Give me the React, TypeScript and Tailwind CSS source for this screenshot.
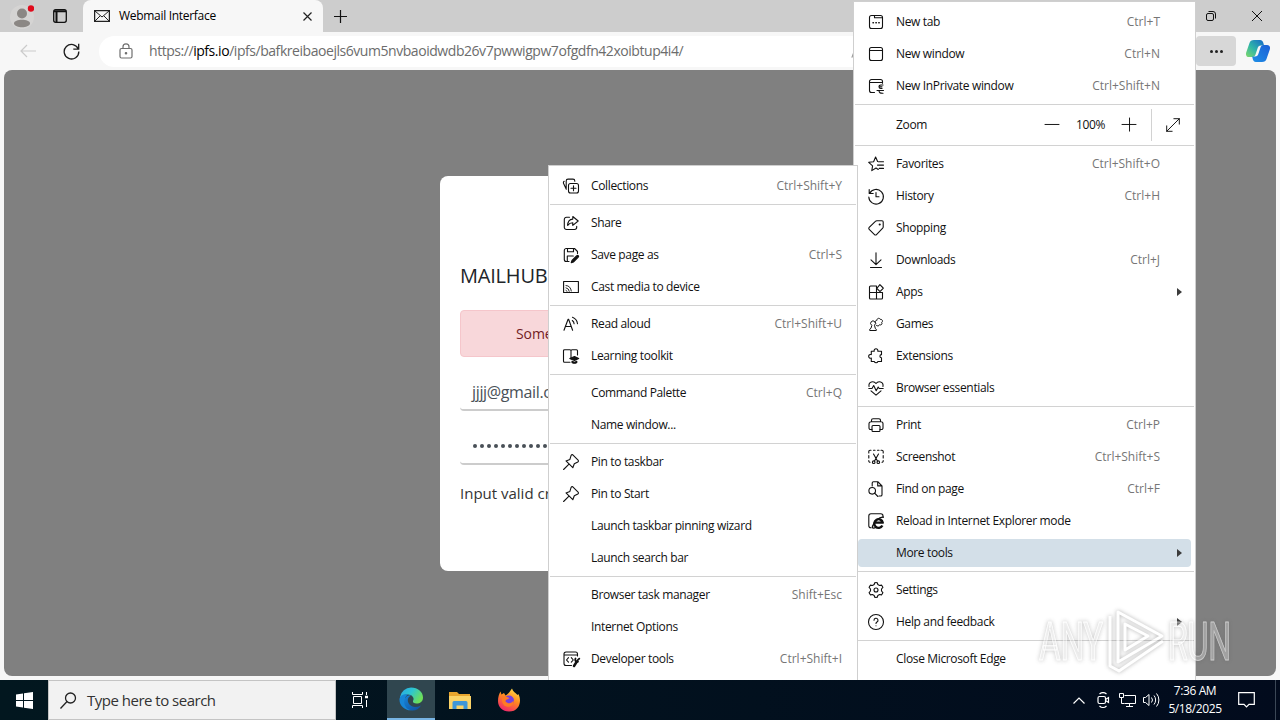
import type { ReactNode } from 'react';

interface MenuEntry {
  label: string;
  icon?: ReactNode;
  shortcut?: string;
  submenu?: boolean;
  active?: boolean;
}

function Glyph({ children, size = 16, width = 1.1 }: { children: ReactNode; size?: number; width?: number }) {
  return (
    <svg
      width={size}
      height={size}
      viewBox="0 0 16 16"
      fill="none"
      stroke="currentColor"
      strokeWidth={width}
      strokeLinecap="round"
      strokeLinejoin="round"
      className="shrink-0 overflow-visible"
    >
      {children}
    </svg>
  );
}

const icons = {
  newTab: (
    <Glyph>
      <rect x="1.5" y="1.5" width="13" height="13" rx="2" />
      <path d="M6.5 1.5v2.2h8" />
      <path d="M5 8.7h.4M7.9 8.7h.4M10.8 8.7h.4" strokeWidth="1.5" />
    </Glyph>
  ),
  newWindow: (
    <Glyph>
      <rect x="1.5" y="1.5" width="13" height="13" rx="2" />
      <path d="M1.5 4.5h13" />
    </Glyph>
  ),
  inPrivate: (
    <Glyph>
      <path d="M6.5 14.5h-3a2 2 0 0 1-2-2v-9a2 2 0 0 1 2-2h9a2 2 0 0 1 2 2v1.7M1.5 4.5h13" />
      <path d="M15 7h-2.300a1.700 1.700 0 0 0 0 3.400H14M9 12.500h6.500M11 12.500c0 2 1 3 4 2.800M12 8.700h2" />
    </Glyph>
  ),
  favorites: (
    <Glyph>
      <path d="M10.3 13.5 8 12l-4.2 2.6.8-4.800L.7 6.300l4.900-.6L7.600 1l2 4.500M10.500 5.800h5M9.500 9.100h6M11.200 12.400h4.300" />
    </Glyph>
  ),
  history: (
    <Glyph>
      <path d="M1.2 1.5v4h4M1.600 5.400A7.300 7.300 0 1 1 .8 9M8 4.500v4.300h3" />
    </Glyph>
  ),
  shopping: (
    <Glyph>
      <path d="M9 .8h5A1.200 1.200 0 0 1 15.200 2v5a1.500 1.500 0 0 1-.5 1.100l-6.200 6.500a1.400 1.400 0 0 1-2 0L1.200 9.300a1.400 1.400 0 0 1 0-2l6.200-5.900A2 2 0 0 1 9 .8Z" />
      <circle cx="11.7" cy="4.5" r=".5" fill="currentColor" />
    </Glyph>
  ),
  downloads: (
    <Glyph>
      <path d="M8 .8v11.700M3 7.800l5 4.900 5-4.900M2.500 15.500h11" />
    </Glyph>
  ),
  apps: (
    <Glyph>
      <path d="M1.500 8.500h13V14a1 1 0 0 1-1 1h-11a1 1 0 0 1-1-1V3a1 1 0 0 1 1-1H8.500v13" />
      <path d="m11.900.7 3.300 3.300a.3.300 0 0 1 0 .4l-3 3a.3.300 0 0 1-.4 0L8.800 4.300Z" fill="#fff" />
    </Glyph>
  ),
  games: (
    <Glyph width={1}>
      <path d="M3.500 9.200a2.400 2.400 0 1 1 3 0l.8 3.300 1 .8v1.200H1.700v-1.200l1-.8Z" />
      <path d="M7.800 7c-1.300-1-.3-3 1-2.500C8.800 2.200 11.500 1.600 12.200 3.300c2.200-.4 3 2.200 1.500 3.200 1 1.700-.7 3-2.200 2.200-.6 1.600-2 1.500-3 .8" />
    </Glyph>
  ),
  extensions: (
    <Glyph>
      <path d="M3.300 3.300h2.900a1.900 1.900 0 1 1 3.600 0h3.700v3.300a1.600 1.600 0 0 0 0 3.200v3.700H9.900a1.900 1.900 0 0 1-3.600 0h-3v-3.400a1.900 1.900 0 1 1 0-3.500Z" />
    </Glyph>
  ),
  essentials: (
    <Glyph>
      <path d="M1 6.500C.3 1.500 5.700.5 8 3.500c2.300-3 7.700-2 7 3M3 10.800 8 15.200l5-4.400M.8 8.500H4l1.700-3 2.500 5.200L10.200 7l1 1.500h4" />
    </Glyph>
  ),
  print: (
    <Glyph>
      <path d="M4 12.500H2.500A1.500 1.500 0 0 1 1 11V6.700a2 2 0 0 1 2-2h10a2 2 0 0 1 2 2V11a1.500 1.500 0 0 1-1.500 1.500H12M3.500 4.700V3.300a1.500 1.500 0 0 1 1.500-1.500h6a1.500 1.500 0 0 1 1.500 1.500v1.400" />
      <rect x="4" y="8.500" width="8" height="6" rx="1" />
    </Glyph>
  ),
  screenshot: (
    <Glyph>
      <path d="M.8 4V2.600A1.300 1.300 0 0 1 2.100 1.300H3M5.500 1.300h1.500M9.500 1.300H11M13 1.300h.9a1.300 1.300 0 0 1 1.300 1.300V4M15.200 6.500V9M15.200 11.500v.5a1.200 1.200 0 0 1-1.200 1.200M.8 6.500V9M.8 11.500v.5A1.200 1.200 0 0 0 2 13.200M5.500 5l4 7M10.500 5l-4 7" />
      <circle cx="5.700" cy="13.200" r="1.300" />
      <circle cx="10.300" cy="13.200" r="1.300" />
    </Glyph>
  ),
  find: (
    <Glyph>
      <path d="M4.200 5V2A1.300 1.300 0 0 1 5.500.7h4.300L14 5v8.700a1.300 1.300 0 0 1-1.300 1.300H11M9.700.9v4h4" />
      <circle cx="4.200" cy="9.800" r="3.300" />
      <path d="m6.600 12.200 3.300 3.300" />
    </Glyph>
  ),
  ieMode: (
    <Glyph>
      <path d="M3 14.800A2 2 0 0 1 .8 12.700V3A2.200 2.200 0 0 1 3 .8h9.800A2.200 2.200 0 0 1 15 3v1.500" />
      <path d="M14.400 12.500a4.300 4.300 0 1 1 .4-2.800H7.500" strokeWidth="2.300" strokeLinecap="butt" />
      <path d="M15.400 4.200C12 3.200 5 9 4.200 14.800c1.300.8 2.600.3 4-.5" strokeWidth="1.200" />
    </Glyph>
  ),
  settings: (
    <Glyph>
      <circle cx="8" cy="8" r="2" />
      <path d="M6.200 2.500 6.700.7a7.400 7.400 0 0 1 2.600 0l.5 1.800 1.800 1 1.900-.4a7.400 7.400 0 0 1 1.400 2.300L13.500 7v2l1.400 1.600a7.400 7.400 0 0 1-1.400 2.300l-1.900-.4-1.800 1-.5 1.800a7.400 7.400 0 0 1-2.600 0l-.5-1.800-1.800-1-1.900.4a7.400 7.400 0 0 1-1.400-2.300L2.500 9V7L1.100 5.400a7.400 7.400 0 0 1 1.400-2.300l1.900.4Z" />
    </Glyph>
  ),
  help: (
    <Glyph>
      <circle cx="8" cy="8" r="7.500" />
      <path d="M6 6.300a2 2 0 1 1 3 1.700c-.7.400-1 .8-1 1.500M8 11.700v.1" />
    </Glyph>
  ),
  collections: (
    <Glyph>
      <rect x="5.500" y="5.500" width="10" height="9.500" rx="2" />
      <path d="M10.500 7.700v5M8 10.200h5M3.300 11.200 .6 5.500a1.600 1.600 0 0 1 .6-2.200M3.200 10.500V2.900a1.800 1.800 0 0 1 1.800-1.800h5a1.800 1.800 0 0 1 1.800 1.800v.3" />
    </Glyph>
  ),
  share: (
    <Glyph>
      <path d="M6.500 2.300H3.500a2.200 2.200 0 0 0-2.200 2.200v7.800a2.200 2.200 0 0 0 2.200 2.200h8a2.200 2.200 0 0 0 2.200-2.200v-1" />
      <path d="M9.800 1.500 15.200 6l-5.400 4.400V7.800C7.500 7.800 6 8.600 4.700 10.500c0-3.700 2.100-6.200 5.100-6.400Z" />
    </Glyph>
  ),
  save: (
    <Glyph>
      <path d="M6 14.500H3.300a2 2 0 0 1-2-2v-9a2 2 0 0 1 2-2h8.200l3 3v2M4.500 1.500v3.200h6V1.500M4.300 14.500V9h6" />
      <path d="m9 13.500 4.800-4.800a1 1 0 0 1 1.500 1.400l-4.700 4.800-2.400.7Z" fill="currentColor" />
    </Glyph>
  ),
  cast: (
    <Glyph>
      <path d="M.6 13.500v-11h14.800v11Z" />
      <path d="M3 11.300a1.500 1.500 0 0 1 1 1M3 8.800a4 4 0 0 1 3.300 3.500M3 6.500c3 0 5 2.500 5.300 5.500" strokeWidth=".9" />
    </Glyph>
  ),
  readAloud: (
    <Glyph>
      <path d="M1 14.200 5.100 3.200h.5l4 11M2.600 10.500h5.500M9.300 4.500a4.500 4.500 0 0 1 1.800 3.300M9.500 1.200a8 8 0 0 1 5 6.500" />
    </Glyph>
  ),
  learning: (
    <Glyph>
      <path d="M7 14.200H1.500a1 1 0 0 1-1-1V2.700a1 1 0 0 1 1-1H7a1 1 0 0 1 1 1v8M8 2.700a1 1 0 0 1 1-1h4.500a1 1 0 0 1 1 1V7" />
      <path d="m6.800 10.500 4.700-2 4.200 2-4.200 2Z" fill="currentColor" />
      <path d="M9 13.300v1.200c1.500 1 3.300 1 4.800 0v-1.200l-2.300.9Z" fill="currentColor" />
    </Glyph>
  ),
  pin: (
    <Glyph>
      <path d="m9.800.8 5.300 5.300a1.200 1.200 0 0 1-.3 1.900l-3.500 1.700-1.500 4L3 6.900l3.900-1.500L8.200 1.200a1.200 1.200 0 0 1 1.600-.4ZM6 10.200.6 15.500" />
    </Glyph>
  ),
  devTools: (
    <Glyph>
      <path d="M8.500 14.500H3a2 2 0 0 1-2-2V3a2 2 0 0 1 2-2h9.500a2 2 0 0 1 2 2v2M1 4h13.500M5.500 6.700 3.500 9l2 2.200M8.300 6.700 10.300 9l-2 2.200" />
      <path d="m11 15 2.700-4.200" strokeWidth="2.500" />
      <path d="M12.500 7.500c-1 2 .5 4 2.500 3.200M16.300 7.600 14.500 9.300" strokeWidth="1.800" />
    </Glyph>
  ),
};

const windowItems: MenuEntry[] = [
  { label: 'New tab', icon: icons.newTab, shortcut: 'Ctrl+T' },
  { label: 'New window', icon: icons.newWindow, shortcut: 'Ctrl+N' },
  { label: 'New InPrivate window', icon: icons.inPrivate, shortcut: 'Ctrl+Shift+N' },
];

const mainMenu: MenuEntry[][] = [
  [
    { label: 'Favorites', icon: icons.favorites, shortcut: 'Ctrl+Shift+O' },
    { label: 'History', icon: icons.history, shortcut: 'Ctrl+H' },
    { label: 'Shopping', icon: icons.shopping },
    { label: 'Downloads', icon: icons.downloads, shortcut: 'Ctrl+J' },
    { label: 'Apps', icon: icons.apps, submenu: true },
    { label: 'Games', icon: icons.games },
    { label: 'Extensions', icon: icons.extensions },
    { label: 'Browser essentials', icon: icons.essentials },
  ],
  [
    { label: 'Print', icon: icons.print, shortcut: 'Ctrl+P' },
    { label: 'Screenshot', icon: icons.screenshot, shortcut: 'Ctrl+Shift+S' },
    { label: 'Find on page', icon: icons.find, shortcut: 'Ctrl+F' },
    { label: 'Reload in Internet Explorer mode', icon: icons.ieMode },
    { label: 'More tools', submenu: true, active: true },
  ],
  [
    { label: 'Settings', icon: icons.settings },
    { label: 'Help and feedback', icon: icons.help, submenu: true },
  ],
  [{ label: 'Close Microsoft Edge' }],
];

const toolsMenu: MenuEntry[][] = [
  [{ label: 'Collections', icon: icons.collections, shortcut: 'Ctrl+Shift+Y' }],
  [
    { label: 'Share', icon: icons.share },
    { label: 'Save page as', icon: icons.save, shortcut: 'Ctrl+S' },
    { label: 'Cast media to device', icon: icons.cast },
  ],
  [
    { label: 'Read aloud', icon: icons.readAloud, shortcut: 'Ctrl+Shift+U' },
    { label: 'Learning toolkit', icon: icons.learning },
  ],
  [{ label: 'Command Palette', shortcut: 'Ctrl+Q' }, { label: 'Name window...' }],
  [
    { label: 'Pin to taskbar', icon: icons.pin },
    { label: 'Pin to Start', icon: icons.pin },
    { label: 'Launch taskbar pinning wizard' },
    { label: 'Launch search bar' },
  ],
  [
    { label: 'Browser task manager', shortcut: 'Shift+Esc' },
    { label: 'Internet Options' },
    { label: 'Developer tools', icon: icons.devTools, shortcut: 'Ctrl+Shift+I' },
  ],
];

function Separator() {
  return (
    <div className="h-[5px] pt-0.5 px-px">
      <div className="h-px bg-[#d2d2d2]" />
    </div>
  );
}

function MenuRow({ item, end }: { item: MenuEntry; end: string }) {
  return (
    <div className="h-8 px-1 py-0.5">
      <div className={`h-7 rounded flex items-center pl-2.5 ${item.active ? 'bg-[#d3dfe8]' : ''}`}>
        <span className="w-4 mr-3 flex text-[#111]">{item.icon}</span>
        <span className="flex-1 whitespace-nowrap">{item.label}</span>
        {item.shortcut && <span className={`tracking-normal text-[#767676] ${end}`}>{item.shortcut}</span>}
        {item.submenu && (
          <svg width="5" height="8" viewBox="0 0 5 8" className="mr-[9px]">
            <path d="M0 0v8l5-4Z" fill="#3b3b3b" />
          </svg>
        )}
      </div>
    </div>
  );
}

function MenuGroups({ groups, end }: { groups: MenuEntry[][]; end: string }) {
  return (
    <>
      {groups.map((group, i) => (
        <div key={i}>
          {i > 0 && <Separator />}
          {group.map((item) => (
            <MenuRow key={item.label} item={item} end={end} />
          ))}
        </div>
      ))}
    </>
  );
}

function MainMenu() {
  return (
    <div className="absolute left-[853px] top-px w-[343px] h-[679px] bg-white border border-[#cfcfcf] border-b-0 py-1">
      {windowItems.map((item) => (
        <MenuRow key={item.label} item={item} end="mr-[31px]" />
      ))}
      <Separator />
      <div className="h-9 flex items-center pl-[42px]">
        <span className="flex-1">Zoom</span>
        <Glyph size={14}>
          <path d="M0 7.400h16" />
        </Glyph>
        <span className="w-[63px] text-center">100%</span>
        <Glyph size={14}>
          <path d="M0 7.400h16M8.600 0v15" />
        </Glyph>
        <span className="w-px h-8 bg-[#d2d2d2] ml-[15px] mr-[14px]" />
        <span className="mr-[15px]">
          <Glyph size={14}>
            <path d="M.8 15.200 15.200.8M9 .8h6.200V7M.8 9v6.200H7" />
          </Glyph>
        </span>
      </div>
      <Separator />
      <MenuGroups groups={mainMenu} end="mr-[31px]" />
    </div>
  );
}

function ToolsMenu() {
  return (
    <div className="absolute left-[548px] top-[165px] w-[310px] h-[515px] bg-white border border-[#cfcfcf] border-b-0 py-1">
      <MenuGroups groups={toolsMenu} end="mr-[11px]" />
    </div>
  );
}

function TabStrip() {
  return (
    <div className="h-8 flex bg-[#cdcdcd]">
      <div className="w-[83px] flex items-center">
        <svg width="24" height="28" viewBox="0 0 24 28" className="ml-[10px]">
          <circle cx="12" cy="15" r="12" fill="#d5d4d3" />
          <circle cx="12" cy="11.500" r="5" fill="#8b8784" />
          <path d="M4 21.500c0-5 16-5 16 0-1 5-15 5-16 0Z" fill="#8b8784" />
          <circle cx="21" cy="6.500" r="3.200" fill="#e00b1c" />
        </svg>
        <svg width="16" height="16" viewBox="0 0 16 16" fill="none" stroke="#111" className="ml-[18px]">
          <rect x="1.700" y="1.700" width="12.600" height="12.600" rx="2" strokeWidth="1.300" />
          <path d="M2 3.300h12M4.500 4v10" strokeWidth="2" />
        </svg>
      </div>
      <div className="w-60 flex items-center bg-[#f7f7f7] rounded-t-lg pl-[11px]">
        <svg width="16" height="12" viewBox="0 0 16 12" fill="none" stroke="#222" strokeWidth="1.300">
          <rect x=".6" y=".6" width="14.800" height="10.800" />
          <path d="m1 1 7 6 7-6M1 11l5-5M15 11l-5-5" strokeWidth="1" />
        </svg>
        <span className="flex-1 pl-[9px] tracking-[-0.3px] text-black">Webmail Interface</span>
        <svg width="9" height="9" viewBox="0 0 9 9" stroke="#222" strokeWidth="1.200" className="mr-[11px]">
          <path d="m.5.5 8 8M8.500.5l-8 8" />
        </svg>
      </div>
      <div className="flex-1 flex items-center pl-[11px]">
        <svg width="13" height="13" viewBox="0 0 13 13" stroke="#111" strokeWidth="1.200">
          <path d="M0 6.500h13M6.500 0v13" />
        </svg>
      </div>
      <div className="flex items-center gap-9 pr-[18px]">
        <svg width="10" height="10" viewBox="0 0 10 10" fill="none" stroke="#111">
          <rect x=".5" y="2.500" width="7" height="7" rx="1.500" />
          <path d="M2.500.5H7A2.500 2.500 0 0 1 9.500 3v4.500" />
        </svg>
        <svg width="10" height="10" viewBox="0 0 10 10" stroke="#111">
          <path d="m0 0 10 10M10 0 0 10" />
        </svg>
      </div>
    </div>
  );
}

function Toolbar() {
  return (
    <div className="h-[38px] flex items-center bg-[#f7f7f7]">
      <svg width="16" height="14" viewBox="0 0 16 14" fill="none" stroke="#cbcbcb" strokeWidth="1.200" className="ml-5">
        <path d="M16 7H1M7 1 1 7l6 6" />
      </svg>
      <svg width="17" height="17" viewBox="0 0 17 17" fill="none" stroke="#1b1b1b" strokeWidth="1.300" className="ml-[27px]">
        <path d="M15.300 6A7.300 7.300 0 1 0 15.800 8.500M15.700.7v5.400h-5.400" />
      </svg>
      <div className="ml-[19px] h-[31px] w-[754px] rounded-l-full bg-white flex items-center pl-5">
        <svg width="14" height="16" viewBox="0 0 14 16" fill="none" stroke="#6e6e6e" strokeWidth="1.200">
          <rect x="1" y="5.500" width="12" height="9.500" rx="1.500" />
          <path d="M4 5.500V3.800a3 3 0 0 1 6 0v1.700" />
          <circle cx="7" cy="10.200" r=".7" fill="#6e6e6e" />
        </svg>
        <span className="ml-4 flex-1 whitespace-nowrap text-sm tracking-[-0.45px] text-[#6c6c6c]">
          https://<span className="text-black">ipfs.io</span>/ipfs/bafkreibaoejls6vum5nvbaoidwdb26v7pwwigpw7ofgdfn42xoibtup4i4/
        </span>
      </div>
      <span className="text-[#999] -ml-[2px]">{icons.readAloud}</span>
      <div className="flex-1" />
      <div className="w-10 h-[30px] rounded bg-[#d7d7d7] flex items-center justify-center gap-0.5">
        <span className="size-[3px] rounded-full bg-[#222]" />
        <span className="size-[3px] rounded-full bg-[#222]" />
        <span className="size-[3px] rounded-full bg-[#222]" />
      </div>
      <svg width="24" height="22" viewBox="0 0 24 22" className="mx-[10px]">
        <defs>
          <linearGradient id="copilotLeft" x1="0" y1="1" x2="1" y2="0">
            <stop offset="0" stopColor="#7fd86a" />
            <stop offset=".45" stopColor="#2fb5a8" />
            <stop offset="1" stopColor="#1767c8" />
          </linearGradient>
          <linearGradient id="copilotRight" x1="0" y1="1" x2="1" y2="0">
            <stop offset="0" stopColor="#1d8fe6" />
            <stop offset="1" stopColor="#1d5fd6" />
          </linearGradient>
        </defs>
        <path
          d="M8 0h6c2 0 3 1.500 3.500 3.500l.5 2h-3c-2 0-3 1-3.500 3l-2 6c-.5 1.500-1.500 2.500-3 2.500H3c-2.500 0-3.500-2-2.800-4.500L3.500 3C4 1 5.500 0 8 0Z"
          fill="url(#copilotLeft)"
        />
        <path
          d="M16 22h-6c-2 0-3-1.500-3.500-4l-.3-1.500H9c2 0 3-1 3.500-3l2-6C15 6 16 5 17.500 5H21c2.500 0 3.500 2 2.800 4.500L20.500 19c-.6 2-2 3-4.500 3Z"
          fill="url(#copilotRight)"
        />
      </svg>
    </div>
  );
}

function LoginCard() {
  return (
    <div className="ml-[436px] mt-[106px] w-[400px] h-[395px] bg-white rounded-lg px-5 overflow-hidden whitespace-nowrap">
      <h1 className="mt-[85px] h-[30px] leading-[30px] text-xl tracking-[-0.2px] font-medium text-[#212529]">MAILHUB</h1>
      <div className="mt-[19px] h-[47px] rounded border border-[#f5c6cb] bg-[#f8d7da] flex items-center pl-[55px] text-sm tracking-[-0.1px] text-[#721c24]">
        Some
      </div>
      <div className="mt-[17px] h-[37px] border-b-2 border-[#ccc] rounded-b pl-3 leading-9 text-base text-[#495057]">
        jjjj@gmail.com
      </div>
      <div className="mt-[17px] h-[37px] pt-px border-b-2 border-[#ccc] rounded-b pl-[13px] flex items-center gap-[3px]">
        {Array.from({ length: 14 }, (_, i) => (
          <span key={i} className="size-1 rounded-full bg-[#495057]" />
        ))}
      </div>
      <p className="mt-4 text-[15px] leading-6 tracking-normal text-[#333]">Input valid cr</p>
    </div>
  );
}

function Watermark() {
  return (
    <svg
      width="204"
      height="72"
      viewBox="0 0 204 72"
      className="absolute left-[1035px] top-[605px] opacity-60 drop-shadow-[0_0_2px_rgba(90,90,90,0.8)]"
      fill="none"
      stroke="#fff"
      strokeLinejoin="round"
    >
      <g fontFamily="Roboto, Liberation Sans, sans-serif" fontSize="53" fill="#fff" fillOpacity=".5" strokeWidth="1">
        <text x="4" y="55" textLength="64" lengthAdjust="spacingAndGlyphs">ANY</text>
        <text x="133" y="55" textLength="63" lengthAdjust="spacingAndGlyphs">RUN</text>
      </g>
      <path d="M83 7 127 31 83 57ZM90 19v26l23-14ZM75 11v50l9 5 44-30" strokeWidth="3" />
    </svg>
  );
}

function Taskbar() {
  return (
    <div className="h-10 flex items-center bg-linear-to-r from-[#02171f] to-[#020b1d] text-white">
      <div className="w-12 flex justify-center">
        <svg width="17" height="17" viewBox="0 0 17 17" fill="#fff">
          <path d="M0 2.500 7 1.500V8H0ZM8 1.300 17 0v8H8ZM0 9h7v6.500l-7-1ZM8 9h9v8l-9-1.300Z" />
        </svg>
      </div>
      <div className="w-72 h-10 border border-[#c4c4c4] bg-[#f2f2f2] flex items-center pl-[11px] text-[#333]">
        <svg width="17" height="17" viewBox="0 0 17 17" fill="none" stroke="#222" strokeWidth="1.300">
          <circle cx="10.500" cy="6" r="5" />
          <path d="m7 9.500-6.500 7" />
        </svg>
        <span className="pl-2.5 text-[15px] tracking-[-0.5px]">Type here to search</span>
      </div>
      <div className="w-[49px] flex justify-center">
        <svg width="17" height="16" viewBox="0 0 17 16" fill="none" stroke="#fff">
          <path d="M.5 0v2.500h10V0M.5 16v-2.500h10V16M1.500 4.500h8v7h-8ZM14.500 0v3M14.500 8v7" />
          <path d="M13 5h3" strokeWidth="2.500" />
        </svg>
      </div>
      <div className="ml-0.5 w-12 h-10 bg-[#30464f] border-b-2 border-[#78b5e4] flex items-center justify-center">
        <svg width="24" height="24" viewBox="0 0 24 24">
          <defs>
            <linearGradient id="edgeTop" x1="0" y1="0" x2="1" y2=".5">
              <stop offset="0" stopColor="#2ba6e4" />
              <stop offset=".5" stopColor="#2cc5d2" />
              <stop offset="1" stopColor="#6ddf59" />
            </linearGradient>
            <linearGradient id="edgeLow" x1="0" y1="0" x2="1" y2="1">
              <stop offset="0" stopColor="#1684d8" />
              <stop offset="1" stopColor="#104f9d" />
            </linearGradient>
          </defs>
          <path
            d="M1 10A11.500 11.500 0 0 1 12 .5C19 .5 24 5 24 10.500c0 4-3 6-6.500 6-2.500 0-4-1-3.500-2.500 2-3-1-6.500-5-6.500C5 7.500 2 9 1 12Z"
            fill="url(#edgeTop)"
          />
          <path d="M.5 12C1 8.500 5 6.500 9 7.500 6 9 5 13 7 17c2 3 6 5.500 10 5C9 26 0 20 .5 12Z" fill="#1785d6" />
          <path
            d="M12 8.500c-6 3-3 11 4 11.500 2 0 4-.5 6-1.500-2 4-7 6-11 4.500C5 21 3 13 8 9c1.500-.8 3-1 4-.5Z"
            fill="url(#edgeLow)"
          />
        </svg>
      </div>
      <div className="w-[49px] flex justify-center">
        <svg width="22" height="18" viewBox="0 0 22 18">
          <path d="M0 1h8l2 2h11v3H0Z" fill="#e8a52e" />
          <path d="M0 5h22v13H0Z" fill="#fbd367" />
          <path d="M3.500 18v-6.500a1.500 1.500 0 0 1 1.500-1.500h12a1.500 1.500 0 0 1 1.500 1.500V18h-4v-3.500h-7V18Z" fill="#3f97d8" />
        </svg>
      </div>
      <div className="w-[49px] flex justify-center">
        <svg width="24" height="24" viewBox="0 0 24 24">
          <defs>
            <linearGradient id="fox" x1=".8" y1="0" x2=".3" y2="1">
              <stop offset="0" stopColor="#ffe14c" />
              <stop offset=".45" stopColor="#ff8a1f" />
              <stop offset="1" stopColor="#f0246c" />
            </linearGradient>
          </defs>
          <path
            d="M1 13C1 9 2 6 3.500 3.500l1 3L7 5l1.500 2.500C11 6.500 12.500 4 15 .5c1 3 3 4 5.500 6.500l.8-1C25 12 23 23.500 12 23.500 5.500 23.500 1 19 1 13Z"
            fill="url(#fox)"
          />
          <circle cx="12" cy="12.500" r="5" fill="#7440e0" />
          <path d="M5.500 8.500c3-1 5 1 7 1.500-1.500 2-4 1-4 3.500 3 3 6 2 8-1 1 5-4 7-7 6-4-1-5.500-6-4-10Z" fill="#ff7a24" />
        </svg>
      </div>
      <div className="flex-1" />
      <svg width="12" height="7" viewBox="0 0 12 7" fill="none" stroke="#fff" strokeWidth="1.200">
        <path d="m.5 6.500 5.500-5.500 5.500 5.500" />
      </svg>
      <svg width="13" height="16" viewBox="0 0 13 16" fill="none" stroke="#fff" strokeWidth="1.200" className="ml-[12px]">
        <rect x="1" y="4.500" width="7.500" height="7" rx="1.500" />
        <path d="m8.500 7.500 3-2v5l-3-2M2.500 2C4.500.3 7.500.3 9.500 2M2.500 14c2 2 5 2 7 0" />
      </svg>
      <svg width="17" height="14" viewBox="0 0 17 14" fill="none" stroke="#fff" className="ml-[9px]">
        <path d="M5.500 2.500h11v8h-11M2.500 4.500v6h3M.5.500h4v4h-4ZM10.500 10.500v3M7 13.500h7" />
      </svg>
      <svg width="17" height="14" viewBox="0 0 17 14" fill="none" stroke="#fff" className="ml-[7px]">
        <path d="M.5 4.500h2L6 1.500v11L2.500 9.500h-2ZM8.500 4.500a4 4 0 0 1 0 5M11 2.500a7 7 0 0 1 0 9M13.500.5a10 10 0 0 1 0 13" />
      </svg>
      <div className="ml-2 w-[54px] text-center text-xs leading-[18px] tracking-[-0.4px]">
        <div>7:36 AM</div>
        <div>5/18/2025</div>
      </div>
      <svg width="17" height="16" viewBox="0 0 17 16" fill="none" stroke="#fff" strokeWidth="1.200" className="ml-4 mr-5">
        <path d="M.7.7h15.600v11.600H11l-2.500 2.500L6 12.300H.7Z" />
      </svg>
      <span className="h-full w-px bg-[#3b4756] mr-1" />
    </div>
  );
}

export default function App() {
  return (
    <div className="relative w-[1280px] h-[720px] overflow-hidden flex flex-col bg-[#f7f7f7] font-['Open_Sans','Noto_Sans',sans-serif] text-xs tracking-[-0.35px] text-[#111]">
      <TabStrip />
      <Toolbar />
      <main className="flex-1 mx-1 mb-1 rounded-lg bg-[#808080] flex items-start">
        <LoginCard />
      </main>
      <Taskbar />
      <MainMenu />
      <ToolsMenu />
      <Watermark />
    </div>
  );
}
